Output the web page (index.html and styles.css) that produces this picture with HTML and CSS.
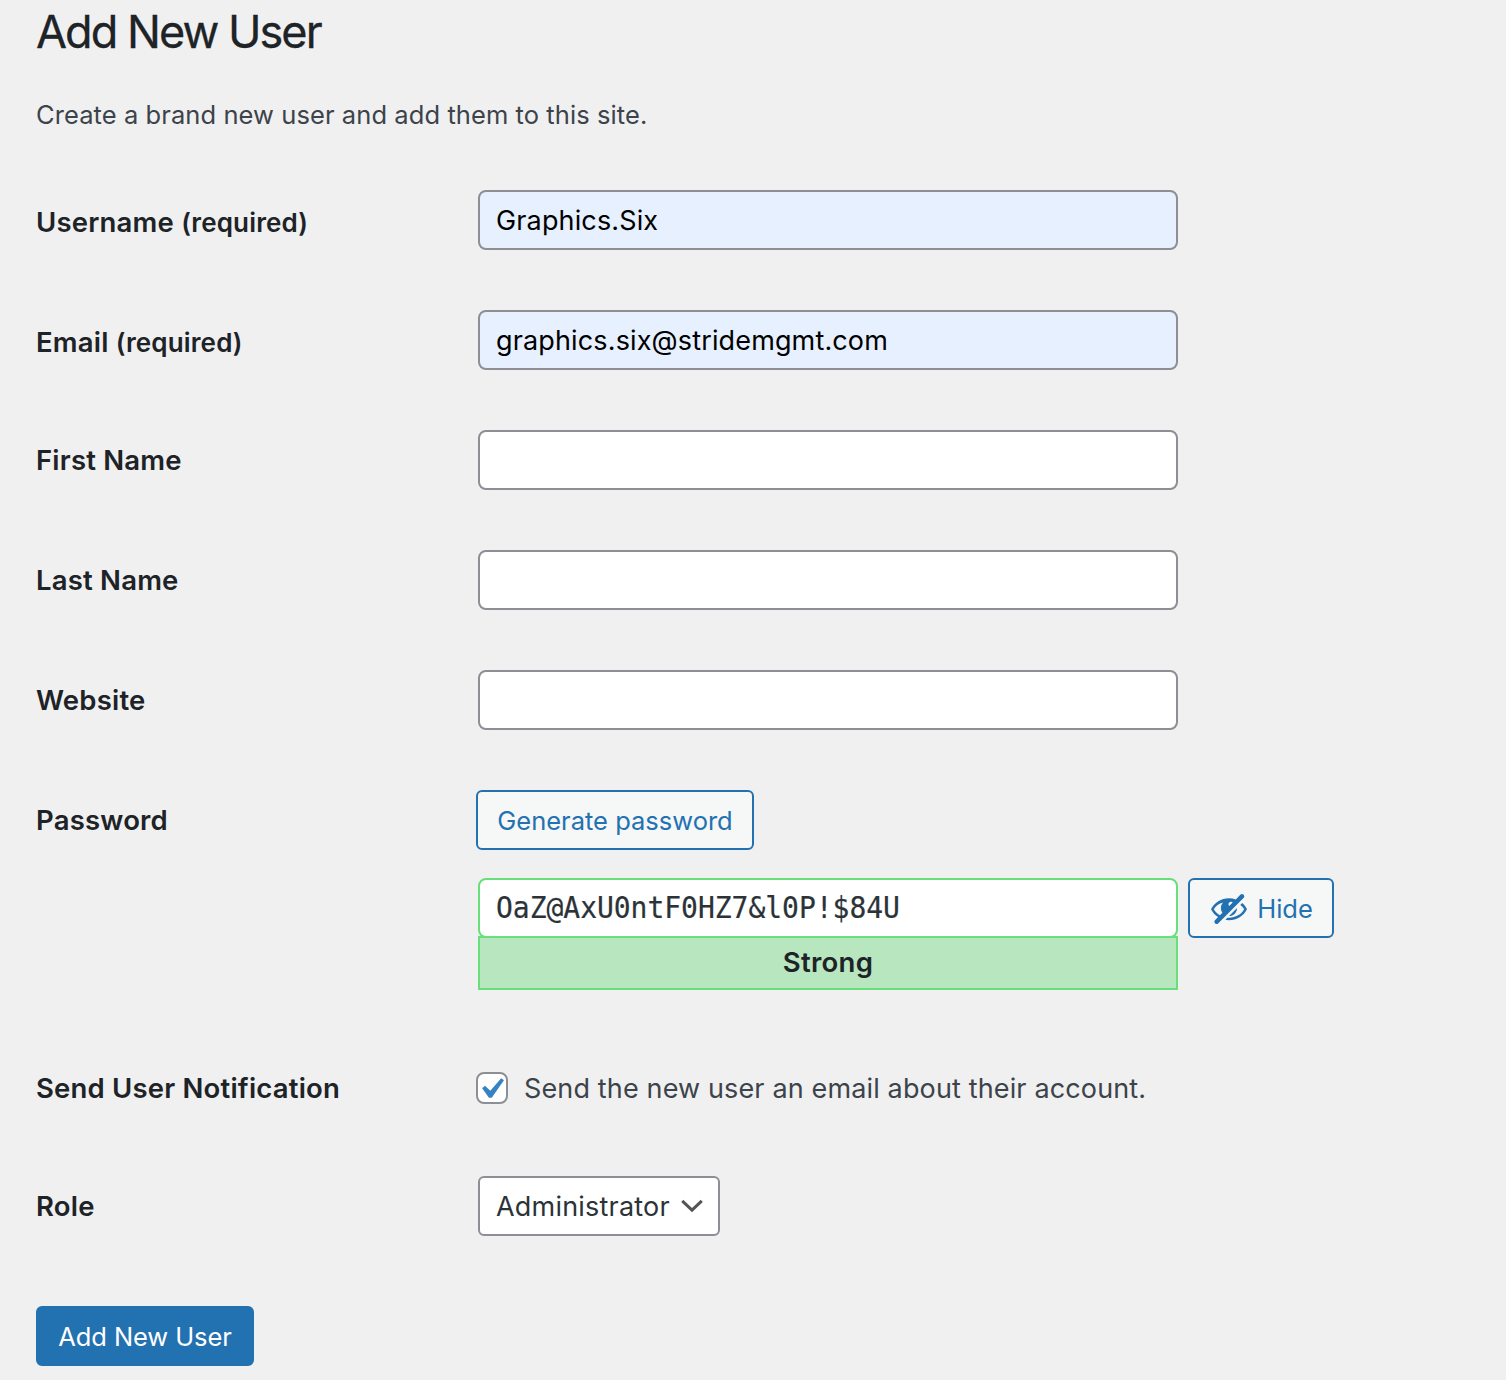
FILE: index.html
```html
<!DOCTYPE html>
<html lang="en">
<head>
<meta charset="utf-8">
<title>Add New User</title>
<link rel="stylesheet" href="styles.css">
</head>
<body>
<main class="page">
  <h1 class="title">Add New User</h1>
  <p class="intro">Create a brand new user and add them to this site.</p>
  <form class="form">
    <div class="row"><label class="label">Username <span class="required">(required)</span></label><div class="field autofill">Graphics.Six</div></div>
    <div class="row"><label class="label">Email <span class="required">(required)</span></label><div class="field autofill">graphics.six@stridemgmt.com</div></div>
    <div class="row"><label class="label raised">First Name</label><div class="field"></div></div>
    <div class="row"><label class="label raised">Last Name</label><div class="field"></div></div>
    <div class="row"><label class="label raised">Website</label><div class="field"></div></div>
    <div class="row row-password">
      <label class="label raised">Password</label>
      <div class="password">
        <button type="button" class="button generate">Generate password</button>
        <div class="password-line">
          <div class="password-box">
            <div class="field secret"><span class="secret-text">OaZ@AxU0ntF0HZ7&amp;l0P!$84U</span></div>
            <div class="strength">Strong</div>
          </div>
          <button type="button" class="button hide">
            <svg class="eye" viewBox="0 0 20 20"><path d="M17.2 3.3l.16.17c.39.39.39 1.02 0 1.41L4.55 17.7c-.39.39-1.03.39-1.41 0l-.17-.17c-.39-.39-.39-1.02 0-1.41l1.59-1.6c-1.57-1-2.76-2.3-3.56-3.93.81-1.65 2.03-2.98 3.64-3.99S8.04 5.09 10 5.09c1.2 0 2.33.21 3.4.6l2.38-2.39c.39-.39 1.03-.39 1.42 0zm-7.09 4.01c-.23.25-.34.54-.34.88 0 .31.12.58.31.81l1.8-1.79c-.13-.12-.28-.21-.45-.26-.11-.01-.28-.03-.49-.04-.33.03-.6.16-.83.4zM2.4 10.59c.69 1.23 1.71 2.25 3.05 3.05l1.28-1.28c-.51-.69-.77-1.47-.77-2.36 0-1.06.36-1.98 1.09-2.76-1.04.27-1.96.7-2.76 1.26-.8.58-1.43 1.27-1.89 2.09zm13.22-2.13l.96-.96c1.02.86 1.83 1.89 2.42 3.09-.81 1.65-2.03 2.98-3.64 3.99s-3.4 1.51-5.36 1.51c-.63 0-1.24-.07-1.83-.18l1.07-1.07c.25.02.5.05.76.05 1.63 0 3.13-.4 4.5-1.21s2.4-1.84 3.1-3.09c-.46-.82-1.09-1.51-1.89-2.09-.03-.01-.06-.03-.09-.04zm-5.58 5.58l4-4c-.01 1.1-.41 2.04-1.18 2.81-.78.78-1.72 1.18-2.82 1.19z"/></svg>
            <span>Hide</span>
          </button>
        </div>
      </div>
    </div>
    <div class="row row-notify">
      <label class="label">Send User Notification</label>
      <label class="notify"><span class="checkbox"><svg viewBox="0 0 20 20"><path d="M14.83 4.89l1.34.94-5.81 8.38H9.02L5.78 9.67l1.34-1.25 2.57 2.4z"/></svg></span><span>Send the new user an email about their account.</span></label>
    </div>
    <div class="row row-role">
      <label class="label">Role</label>
      <div class="select"><span>Administrator</span><svg viewBox="0 0 32 32"><path d="M6.2 10.8l9.8 9.4 9.8-9.4"/></svg></div>
    </div>
    <button type="button" class="button primary">Add New User</button>
  </form>
</main>
</body>
</html>
```
FILE: styles.css
```css
* { box-sizing: border-box; }
body {
  margin: 0;
  background: #f0f0f1;
  color: #3c434a;
  font-family: Inter, "Liberation Sans", sans-serif;
  font-size: 27px;
  letter-spacing: 0.14px;
}
.page { height: 1380px; padding: 2px 36px 0; overflow: hidden; }
.title { margin: 0; font-size: 45px; line-height: 60px; font-weight: 400; color: #1d2327; letter-spacing: -1.95px; -webkit-text-stroke: 0.3px currentColor; }
.intro { margin: 34px 0 0; font-size: 25.5px; line-height: 38px; letter-spacing: 0.08px; }
.form { margin-top: 56px; }
.row { display: flex; align-items: flex-start; height: 120px; }
.label {
  width: 442px; flex: none; padding-top: 15px; line-height: 34px; font-weight: 600;
  color: #1d2327; font-size: 27.5px; letter-spacing: 0.2px;
}
.raised { padding-top: 13px; }
.required { font-size: 26px; letter-spacing: 0.15px; }
.field {
  width: 700px; height: 60px; padding: 1px 16px 0; border: 2px solid #8c8f94; border-radius: 8px;
  background: #fff; color: #2c3338; line-height: 56px; white-space: nowrap;
}
.autofill { background: #e7f0fe; color: #000; }
.button {
  display: flex; align-items: center; justify-content: center; height: 60px; padding: 0;
  border: 2px solid #2271b1; border-radius: 6px; background: #f6f7f7; color: #2271b1;
  font-family: inherit; font-size: 25.5px; letter-spacing: 0; white-space: nowrap;
}
.row-password { height: 282px; }
.generate { width: 278px; margin-left: -2px; }
.password-line { display: flex; gap: 10px; margin-top: 28px; }
.secret { padding-top: 0; border-color: #68de7c; font-family: "DejaVu Sans Mono", monospace; font-size: 28px; letter-spacing: -0.03px; }
.secret-text { display: inline-block; transform: scaleY(1.07); -webkit-text-stroke: 0.2px currentColor; }
.strength {
  height: 54px; margin-top: -2px; border: 2px solid #68de7c; background: #b8e6bf; color: #1d2327;
  text-align: center; font-size: 27.5px; font-weight: 600; letter-spacing: 0.3px; line-height: 48px;
}
.hide { width: 146px; gap: 8px; }
.eye { width: 40px; height: 40px; fill: currentColor; }
.row-notify { height: 104px; }
.row-notify .label { padding-top: 0; margin-top: -1px; }
.notify { display: flex; align-items: center; height: 32px; margin-left: -2px; gap: 16px; white-space: nowrap; }
.checkbox { width: 32px; height: 32px; border: 2px solid #8c8f94; border-radius: 8px; background: #fff; }
.checkbox svg { display: block; width: 42px; height: 42px; margin: -6px 0 0 -8px; fill: #3582c4; }
.row-role { height: 130px; }
.row-role .label { padding-top: 13px; }
.select {
  display: flex; align-items: center; justify-content: space-between; width: 242px; height: 60px;
  padding: 0 10px 0 16px; border: 2px solid #8c8f94; border-radius: 6px; background: #fff; color: #2c3338;
  letter-spacing: 0.2px;
}
.select svg { width: 32px; height: 32px; flex: none; margin-left: -4px; fill: none; stroke: #555; stroke-width: 3; }
.primary { width: 218px; background: #2271b1; color: #fff; letter-spacing: -0.1px; }
```
